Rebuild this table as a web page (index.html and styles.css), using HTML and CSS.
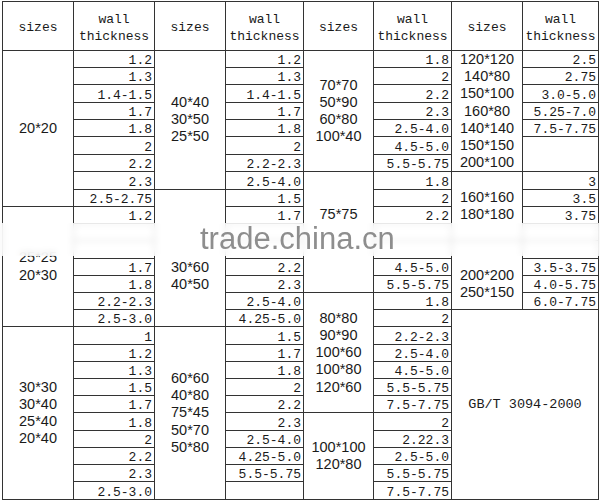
FILE: index.html
```html
<!DOCTYPE html>
<html>
<head>
<meta charset="utf-8">
<link rel="stylesheet" href="styles.css">
</head>
<body>
<div class="page">
<table class="spec">
<colgroup>
<col class="w71"><col class="w81"><col class="w71"><col class="w78"><col class="w70"><col class="w78"><col class="w71"><col class="w76">
</colgroup>
<thead>
<tr class="head">
<th>sizes</th><th>wall<br>thickness</th><th>sizes</th><th>wall<br>thickness</th><th>sizes</th><th>wall<br>thickness</th><th>sizes</th><th>wall<br>thickness</th>
</tr>
</thead>
<tbody>
<tr><td class="sz" rowspan="9">20*20</td><td class="wt">1.2</td><td class="sz" rowspan="8">40*40<br>30*50<br>25*50</td><td class="wt">1.2</td><td class="sz" rowspan="7">70*70<br>50*90<br>60*80<br>100*40</td><td class="wt">1.8</td><td class="sz" rowspan="7">120*120<br>140*80<br>150*100<br>160*80<br>140*140<br>150*150<br>200*100</td><td class="wt">2.5</td></tr>
<tr><td class="wt">1.3</td><td class="wt">1.3</td><td class="wt">2</td><td class="wt">2.75</td></tr>
<tr><td class="wt">1.4-1.5</td><td class="wt">1.4-1.5</td><td class="wt">2.2</td><td class="wt">3.0-5.0</td></tr>
<tr><td class="wt">1.7</td><td class="wt">1.7</td><td class="wt">2.3</td><td class="wt">5.25-7.0</td></tr>
<tr><td class="wt">1.8</td><td class="wt">1.8</td><td class="wt">2.5-4.0</td><td class="wt">7.5-7.75</td></tr>
<tr><td class="wt">2</td><td class="wt">2</td><td class="wt">4.5-5.0</td><td class="wt" rowspan="2"></td></tr>
<tr><td class="wt">2.2</td><td class="wt">2.2-2.3</td><td class="wt">5.5-5.75</td></tr>
<tr><td class="wt">2.3</td><td class="wt">2.5-4.0</td><td class="sz up" rowspan="7">75*75</td><td class="wt">1.8</td><td class="sz" rowspan="4">160*160<br>180*180</td><td class="wt">3</td></tr>
<tr><td class="wt">2.5-2.75</td><td class="sz down2" rowspan="8">30*60<br>40*50</td><td class="wt">1.5</td><td class="wt">2</td><td class="wt">3.5</td></tr>
<tr><td class="sz" rowspan="7">25*25<br>20*30</td><td class="wt">1.2</td><td class="wt">1.7</td><td class="wt">2.2</td><td class="wt">3.75</td></tr>
<tr><td class="wt"></td><td class="wt"></td><td class="wt"></td><td class="wt"></td></tr>
<tr><td class="wt"></td><td class="wt"></td><td class="wt"></td><td class="sz down1" rowspan="4">200*200<br>250*150</td><td class="wt"></td></tr>
<tr><td class="wt">1.7</td><td class="wt">2.2</td><td class="wt">4.5-5.0</td><td class="wt">3.5-3.75</td></tr>
<tr><td class="wt">1.8</td><td class="wt">2.3</td><td class="wt">5.5-5.75</td><td class="wt">4.0-5.75</td></tr>
<tr><td class="wt">2.2-2.3</td><td class="wt">2.5-4.0</td><td class="sz" rowspan="7">80*80<br>90*90<br>100*60<br>100*80<br>120*60</td><td class="wt">1.8</td><td class="wt">6.0-7.75</td></tr>
<tr><td class="wt">2.5-3.0</td><td class="wt">4.25-5.0</td><td class="wt">2</td><td class="std" colspan="2" rowspan="11">GB/T 3094-2000</td></tr>
<tr><td class="sz" rowspan="10">30*30<br>30*40<br>25*40<br>20*40</td><td class="wt">1</td><td class="sz" rowspan="10">60*60<br>40*80<br>75*45<br>50*70<br>50*80</td><td class="wt">1.5</td><td class="wt">2.2-2.3</td></tr>
<tr><td class="wt">1.2</td><td class="wt">1.7</td><td class="wt">2.5-4.0</td></tr>
<tr><td class="wt">1.3</td><td class="wt">1.8</td><td class="wt">4.5-5.0</td></tr>
<tr><td class="wt">1.5</td><td class="wt">2</td><td class="wt">5.5-5.75</td></tr>
<tr><td class="wt">1.7</td><td class="wt">2.2</td><td class="wt">7.5-7.75</td></tr>
<tr><td class="wt">1.8</td><td class="wt">2.3</td><td class="sz" rowspan="5">100*100<br>120*80</td><td class="wt">2</td></tr>
<tr><td class="wt">2</td><td class="wt">2.5-4.0</td><td class="wt">2.22.3</td></tr>
<tr><td class="wt">2.2</td><td class="wt">4.25-5.0</td><td class="wt">2.5-5.0</td></tr>
<tr><td class="wt">2.3</td><td class="wt">5.5-5.75</td><td class="wt">5.5-5.75</td></tr>
<tr><td class="wt">2.5-3.0</td><td class="wt"></td><td class="wt">7.5-7.75</td></tr>
</tbody>
</table>
<div class="band"></div>
<div class="mark">trade.china.cn</div>
</div>
</body>
</html>
```

FILE: styles.css
```css
html, body {
  margin: 0;
  padding: 0;
  background: #ffffff;
}

.page {
  position: relative;
  width: 600px;
  height: 500px;
  overflow: hidden;
}

.spec {
  border-collapse: collapse;
  table-layout: fixed;
  width: 596px;
  margin: 1px 0 0 2px;
  font-family: "Liberation Mono", "DejaVu Sans Mono", monospace;
  font-size: 13px;
  color: #1a1a1a;
}

.w71 { width: 71px; }
.w81 { width: 81px; }
.w78 { width: 78px; }
.w70 { width: 70px; }
.w76 { width: 76px; }

.spec th,
.spec td {
  border: 1px solid #333333;
  padding: 0;
}

.head {
  height: 49px;
}

.spec th {
  font-weight: normal;
  line-height: 17px;
  padding-top: 3px;
  vertical-align: middle;
  text-align: center;
}

.spec tbody tr {
  height: 17.23px;
}

.wt {
  text-align: right;
  padding-right: 2px !important;
  line-height: 12px;
  vertical-align: bottom;
  white-space: nowrap;
}

.sz {
  font-family: "Liberation Sans", Arial, sans-serif;
  font-size: 14.5px;
  line-height: 17.2px;
  text-align: center;
  vertical-align: middle;
  color: #1a1a1a;
}

.sz.up { padding-bottom: 35px; }
.sz.down2 { padding-top: 36px; }
.sz.down1 { padding-top: 17px; }

.std {
  text-align: center;
  vertical-align: middle;
  font-size: 13.5px;
}

.band {
  position: absolute;
  left: 0;
  top: 223px;
  width: 600px;
  height: 33px;
  background: rgba(255, 255, 255, 0.8);
  backdrop-filter: blur(3px);
}

.mark {
  position: absolute;
  left: 200px;
  top: 226px;
  font-family: "Liberation Sans", Arial, sans-serif;
  font-size: 31px;
  line-height: 26px;
  color: #8e8e8e;
  white-space: nowrap;
}
```
